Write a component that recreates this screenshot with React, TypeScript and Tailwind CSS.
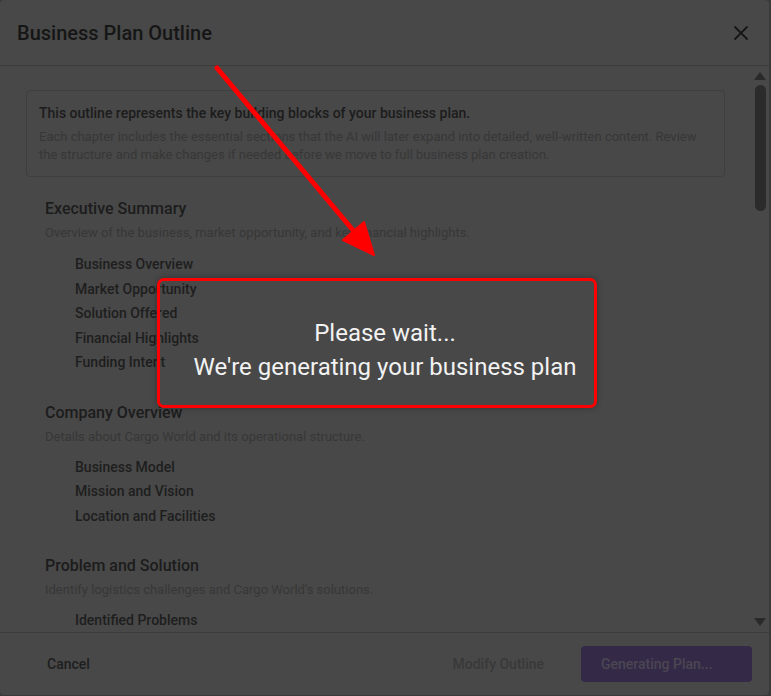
import React from "react";

const sections = [
  {
    title: "Executive Summary",
    desc: "Overview of the business, market opportunity, and key financial highlights.",
    items: ["Business Overview", "Market Opportunity", "Solution Offered", "Financial Highlights", "Funding Intent"],
    first: true,
  },
  {
    title: "Company Overview",
    desc: "Details about Cargo World and its operational structure.",
    items: ["Business Model", "Mission and Vision", "Location and Facilities"],
    first: false,
  },
  {
    title: "Problem and Solution",
    desc: "Identify logistics challenges and Cargo World's solutions.",
    items: ["Identified Problems"],
    first: false,
  },
];

export default function App() {
  return (
    <div
      className="relative w-[771px] h-[696px] bg-[#3a3a3a] overflow-hidden"
      style={{ fontFamily: "Roboto, 'Noto Sans', sans-serif" }}
    >
      <div className="w-[769px] h-[695px] bg-[#484848] rounded-[4px] flex flex-col">
        {/* Header */}
        <div className="h-[66px] shrink-0 border-b border-[#3c3c3c] flex items-center justify-between pl-[17px] pr-[20px]">
          <div className="text-[20px] font-medium text-[#161616] leading-[24px]">Business Plan Outline</div>
          <svg width="16" height="16" viewBox="0 0 16 16" className="text-[#161616]">
            <path d="M2 2 L14 14 M14 2 L2 14" stroke="currentColor" strokeWidth="1.8" strokeLinecap="round" />
          </svg>
        </div>

        {/* Body */}
        <div className="flex-1 flex min-h-0">
          <div className="flex-1 overflow-hidden pl-[26px] pr-[27px] pt-[24px]">
            <div className="border border-[#3e3e3e] rounded-[4px] pl-[12px] pr-[12px] pt-[12px] pb-[12px]">
              <div className="text-[14px] font-medium text-[#1c1c1c] leading-[20px]">
                This outline represents the key building blocks of your business plan.
              </div>
              <div className="text-[13px] text-[#373737] leading-[18px] mt-[5px]">
                Each chapter includes the essential sections that the AI will later expand into detailed, well-written content. Review the structure and make changes if needed before we move to full business plan creation.
              </div>
            </div>
            <div className="pl-[19px] pt-[20px] flex flex-col gap-[26px]">
              {sections.map((s) => (
                <div key={s.title}>
                  <div className="text-[16px] font-medium text-[#1c1c1c] leading-[24px]">{s.title}</div>
                  <div className="text-[13px] text-[#373737] leading-[18px] mt-[3px]">{s.desc}</div>
                  <div className={s.first ? "pl-[30px] mt-[10px]" : "pl-[30px] mt-[9px]"}>
                    {s.items.map((it) => (
                      <div key={it} className="text-[14px] font-medium text-[#1e1e1e] h-[24.5px] leading-[24.5px]">
                        {it}
                      </div>
                    ))}
                  </div>
                </div>
              ))}
            </div>
          </div>
          {/* Scrollbar */}
          <div className="w-[16px] shrink-0 flex flex-col items-center pt-[6px] pb-[6px] mr-[1px]">
            <svg width="12" height="8" viewBox="0 0 12 8">
              <path d="M6 0 L12 8 L0 8 Z" fill="#2a2a2a" />
            </svg>
            <div className="w-[11px] h-[126px] mt-[5px] rounded-full bg-[#2b2b2b]" />
            <div className="flex-1" />
            <svg width="12" height="8" viewBox="0 0 12 8">
              <path d="M0 0 L12 0 L6 8 Z" fill="#2a2a2a" />
            </svg>
          </div>
        </div>

        {/* Footer */}
        <div className="h-[63px] shrink-0 border-t border-[#3c3c3c] flex items-center justify-between pl-[47px] pr-[17px]">
          <div className="text-[14px] font-medium text-[#1e1e1e]">Cancel</div>
          <div className="flex items-center gap-[37px]">
            <div className="text-[14px] font-medium text-[#393939]">Modify Outline</div>
            <div className="w-[171px] h-[36px] rounded-[4px] bg-[#342a48] flex items-center justify-start pl-[20px] text-[14px] font-medium text-[#4b4652]">
              Generating Plan...
            </div>
          </div>
        </div>
      </div>

      {/* Red annotation box */}
      <div className="absolute left-[157px] top-[278px] w-[440px] h-[130px] border-[3px] border-[#ff0000] rounded-[7px] shadow-[0_0_6px_rgba(0,0,0,0.3)] flex flex-col items-center justify-center pl-[16px] pt-[14px]">
        <div className="text-[24px] text-[#f2f2f2] leading-[34px]">Please wait...</div>
        <div className="text-[24px] text-[#f2f2f2] leading-[34px]">We're generating your business plan</div>
      </div>

      {/* Arrow */}
      <svg className="absolute left-0 top-0 pointer-events-none" width="771" height="696" viewBox="0 0 771 696">
        <line x1="217" y1="68" x2="357" y2="235" stroke="#ff0000" strokeWidth="5" strokeLinecap="round" />
        <path d="M374 255 L343 240 L364 222 Z" fill="#ff0000" stroke="#ff0000" strokeWidth="2" strokeLinejoin="round" />
      </svg>
    </div>
  );
}
